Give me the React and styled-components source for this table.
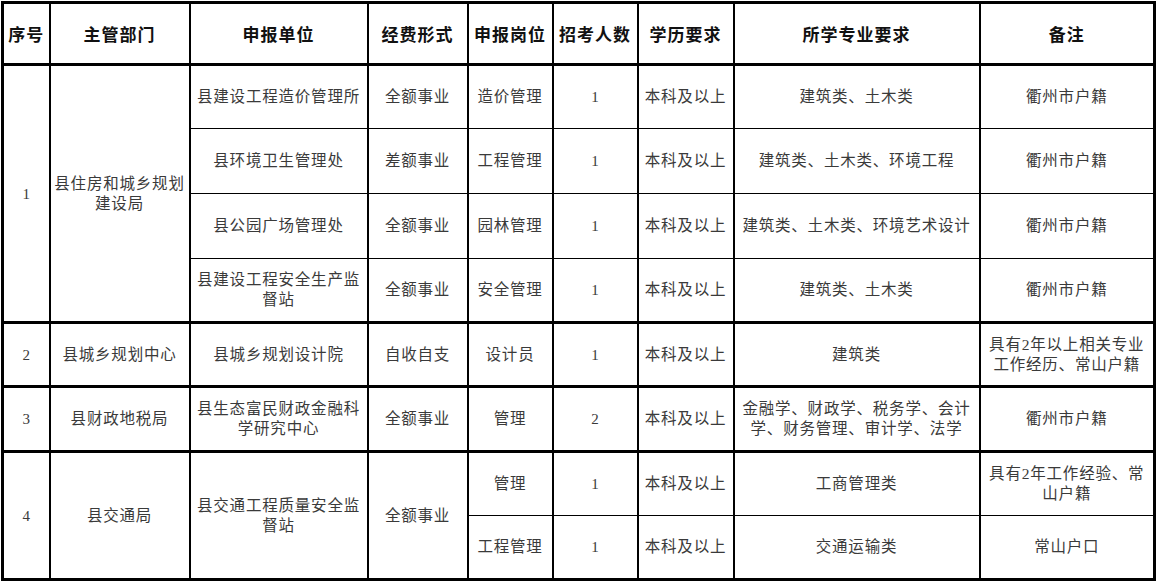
import React from 'react';
import styled, { createGlobalStyle } from 'styled-components';

const GlobalStyle = createGlobalStyle`
  html, body {
    margin: 0;
    padding: 0;
    background: #fff;
  }
  body {
    font-family: "Liberation Serif", "Noto Sans CJK SC", serif;
  }
`;

const columns = [47, 140, 178, 100, 85, 85, 96, 246, 175];
const headers = ['序号', '主管部门', '申报单位', '经费形式', '申报岗位', '招考人数', '学历要求', '所学专业要求', '备注'];

const groups = [
  {
    shared: ['1', '县住房和城乡规划\n建设局'],
    rows: [
      ['县建设工程造价管理所', '全额事业', '造价管理', '1', '本科及以上', '建筑类、土木类', '衢州市户籍'],
      ['县环境卫生管理处', '差额事业', '工程管理', '1', '本科及以上', '建筑类、土木类、环境工程', '衢州市户籍'],
      ['县公园广场管理处', '全额事业', '园林管理', '1', '本科及以上', '建筑类、土木类、环境艺术设计', '衢州市户籍'],
      ['县建设工程安全生产监\n督站', '全额事业', '安全管理', '1', '本科及以上', '建筑类、土木类', '衢州市户籍'],
    ],
    heights: [64, 65, 65, 64],
  },
  {
    shared: ['2', '县城乡规划中心'],
    rows: [
      ['县城乡规划设计院', '自收自支', '设计员', '1', '本科及以上', '建筑类', '具有2年以上相关专业\n工作经历、常山户籍'],
    ],
    heights: [64],
  },
  {
    shared: ['3', '县财政地税局'],
    rows: [
      ['县生态富民财政金融科\n学研究中心', '全额事业', '管理', '2', '本科及以上', '金融学、财政学、税务学、会计\n学、财务管理、审计学、法学', '衢州市户籍'],
    ],
    heights: [65],
  },
  {
    shared: ['4', '县交通局', '县交通工程质量安全监\n督站', '全额事业'],
    rows: [
      ['管理', '1', '本科及以上', '工商管理类', '具有2年工作经验、常\n山户籍'],
      ['工程管理', '1', '本科及以上', '交通运输类', '常山户口'],
    ],
    heights: [64, 64],
  },
];

const Page = styled.div`
  padding: 1px 0 0 1px;
`;

const Table = styled.table`
  border-collapse: collapse;
  table-layout: fixed;
  width: 1153px;
  border: 3px solid #000;
`;

const HeadRow = styled.tr`
  height: 62px;
`;

const HeadCell = styled.th`
  border-left: 2px solid #000;
  border-right: 2px solid #000;
  border-bottom: 3px solid #000;
  padding: 0;
  font-family: "Noto Sans CJK SC", sans-serif;
  font-weight: 700;
  font-size: 17px;
  letter-spacing: 1px;
  color: #111;
  text-align: center;
  vertical-align: middle;
  white-space: pre;
`;

const Row = styled.tr`
  & > td {
    border-top: ${p => (p.$groupStart ? '3px' : '1px')} solid #000;
  }
`;

const Cell = styled.td`
  border-left: 2px solid #000;
  border-right: 2px solid #000;
  border-bottom: 1px solid #000;
  padding: 0 2px;
  font-size: ${p => (p.$num ? '15px' : '15.5px')};
  letter-spacing: ${p => (p.$num ? '0' : '0.8px')};
  line-height: 20px;
  color: #3a3a3a;
  text-align: center;
  vertical-align: middle;
  white-space: pre;
`;

const isNum = v => /^\d+$/.test(v);

export default function App() {
  return (
    <Page>
      <GlobalStyle />
      <Table>
        <colgroup>
          {columns.map((w, i) => (
            <col key={i} style={{ width: w }} />
          ))}
        </colgroup>
        <thead>
          <HeadRow>
            {headers.map(h => (
              <HeadCell key={h}>{h}</HeadCell>
            ))}
          </HeadRow>
        </thead>
        <tbody>
          {groups.map((g, gi) =>
            g.rows.map((r, ri) => (
              <Row key={`${gi}-${ri}`} $groupStart={ri === 0} style={{ height: g.heights[ri] }}>
                {ri === 0 &&
                  g.shared.map((s, si) => (
                    <Cell key={`s${si}`} rowSpan={g.rows.length} $num={isNum(s)}>
                      {s}
                    </Cell>
                  ))}
                {r.map((c, ci) => (
                  <Cell key={ci} $num={isNum(c)}>
                    {c}
                  </Cell>
                ))}
              </Row>
            ))
          )}
        </tbody>
      </Table>
    </Page>
  );
}
